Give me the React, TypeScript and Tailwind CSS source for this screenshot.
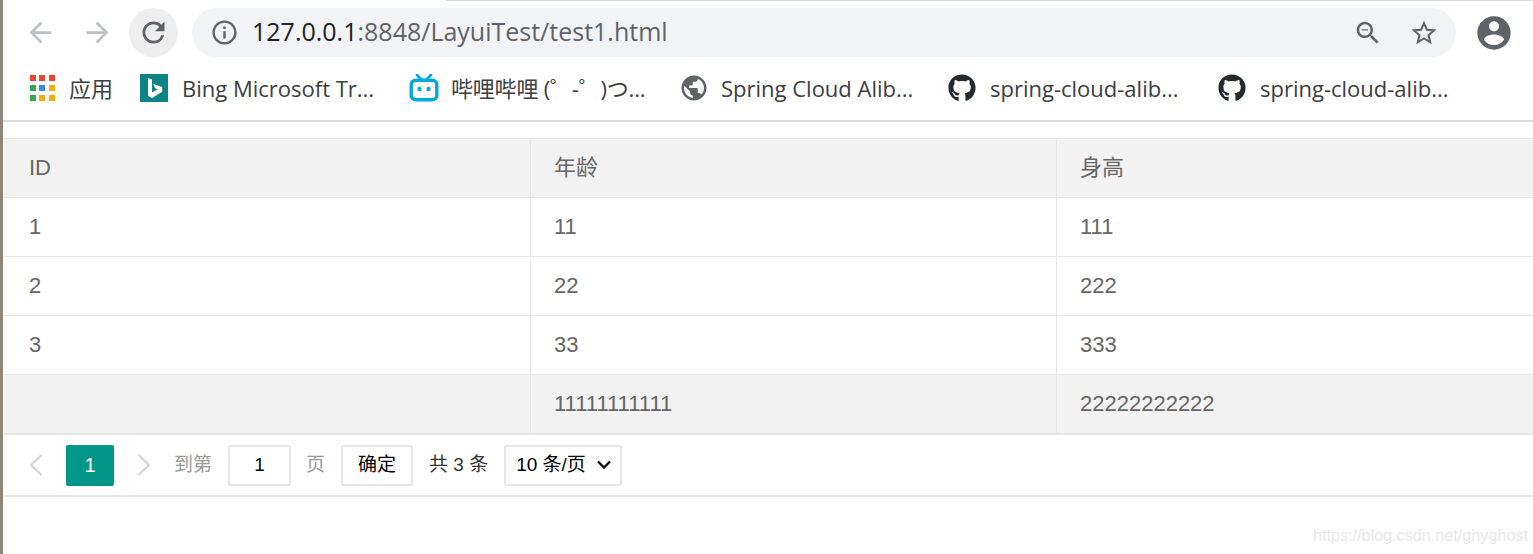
import { FaGithub } from 'react-icons/fa';

const uiFont = "font-['Open_Sans','Noto_Sans_CJK_SC',sans-serif]";
const tableFont = "font-['Liberation_Sans','Noto_Sans_CJK_SC',sans-serif]";

function MaterialIcon({ d, className }: { d: string; className: string }) {
  return (
    <svg viewBox="0 0 24 24" fill="currentColor" className={className}>
      <path d={d} />
    </svg>
  );
}

const icons = {
  back: 'M20 11H7.83l5.59-5.59L12 4l-8 8 8 8 1.41-1.41L7.83 13H20v-2z',
  forward: 'M12 4l-1.41 1.41L16.17 11H4v2h12.17l-5.58 5.59L12 20l8-8z',
  reload:
    'M17.65 6.35A7.958 7.958 0 0 0 12 4c-4.42 0-7.99 3.58-7.99 8s3.57 8 7.99 8c3.73 0 6.84-2.55 7.73-6h-2.08A5.99 5.99 0 0 1 12 18c-3.31 0-6-2.69-6-6s2.69-6 6-6c1.66 0 3.14.69 4.22 1.78L13 11h7V4l-2.35 2.35z',
  info: 'M11 7h2v2h-2zm0 4h2v6h-2zm1-9C6.48 2 2 6.48 2 12s4.48 10 10 10 10-4.48 10-10S17.52 2 12 2zm0 18c-4.41 0-8-3.59-8-8s3.59-8 8-8 8 3.59 8 8-3.59 8-8 8z',
  zoomOut:
    'M15.5 14h-.79l-.28-.27C15.41 12.59 16 11.11 16 9.5 16 5.91 13.09 3 9.5 3S3 5.91 3 9.5 5.91 16 9.5 16c1.61 0 3.09-.59 4.23-1.57l.27.28v.79l5 4.99L20.49 19l-4.99-5zm-6 0C7.01 14 5 11.99 5 9.5S7.01 5 9.5 5 14 7.01 14 9.5 11.99 14 9.5 14zM7 9h5v1H7z',
  star: 'M22 9.24l-7.19-.62L12 2 9.19 8.63 2 9.24l5.46 4.73L5.82 21 12 17.27 18.18 21l-1.63-7.03L22 9.24zM12 15.4l-3.76 2.27 1-4.28-3.32-2.88 4.38-.38L12 6.1l1.71 4.04 4.38.38-3.32 2.88 1 4.28L12 15.4z',
  account:
    'M12 2C6.48 2 2 6.48 2 12s4.48 10 10 10 10-4.48 10-10S17.52 2 12 2zm0 3c1.66 0 3 1.34 3 3s-1.34 3-3 3-3-1.34-3-3 1.34-3 3-3zm0 14.2c-2.5 0-4.71-1.28-6-3.22.03-1.99 4-3.08 6-3.08 1.99 0 5.97 1.09 6 3.08-1.29 1.94-3.5 3.22-6 3.22z',
  globe:
    'M12 2C6.48 2 2 6.48 2 12s4.48 10 10 10 10-4.48 10-10S17.52 2 12 2zm-1 17.93c-3.95-.49-7-3.85-7-7.93 0-.62.08-1.21.21-1.79L9 15v1c0 1.1.9 2 2 2v1.93zm6.9-2.54c-.26-.81-1-1.39-1.9-1.39h-1v-3c0-.55-.45-1-1-1H8v-2h2c.55 0 1-.45 1-1V7h2c1.1 0 2-.9 2-2v-.41c2.93 1.19 5 4.06 5 7.41 0 2.08-.8 3.97-2.1 5.39z',
};

function AppsIcon() {
  const colors = ['#ef4136', '#ef4136', '#ef4136', '#34a853', '#2f8cf3', '#fbab09', '#34a853', '#fbab09', '#fbab09'];
  return (
    <div className="grid grid-cols-3 gap-[4px] w-[24px]">
      {colors.map((c, i) => (
        <span key={i} className="w-[6px] h-[6px]" style={{ backgroundColor: c }} />
      ))}
    </div>
  );
}

function BingIcon() {
  return (
    <svg viewBox="0 0 28 28" className="w-[28px] h-[28px]">
      <rect width="28" height="28" fill="#0c8484" />
      <path d="M8 4l4 1.4v13.2l5.6-3.2-2.7-1.3-1.7-4.2 9 3.2v4.6L12 24l-4-2.2z" fill="#fff" />
    </svg>
  );
}

function BiliIcon() {
  return (
    <svg viewBox="0 0 30 28" className="w-[30px] h-[28px]">
      <path d="M8 1l5 5M22 1l-5 5" stroke="#00a9de" strokeWidth="2.6" strokeLinecap="round" />
      <rect x="2.2" y="6.2" width="25.6" height="19.6" rx="4.5" fill="none" stroke="#00a9de" strokeWidth="3.4" />
      <circle cx="10.5" cy="15" r="2.2" fill="#00a9de" />
      <circle cx="19.5" cy="15" r="2.2" fill="#00a9de" />
    </svg>
  );
}

function Bookmark({ icon, label, className }: { icon: React.ReactNode; label: string; className: string }) {
  return (
    <div className={`flex items-center ${className}`}>
      {icon}
      <span className="text-[22px] leading-none text-[#3c4043] whitespace-nowrap">{label}</span>
    </div>
  );
}

const rows = [
  { id: 'ID', age: '年龄', height: '身高', shaded: true },
  { id: '1', age: '11', height: '111' },
  { id: '2', age: '22', height: '222' },
  { id: '3', age: '33', height: '333' },
  { id: '', age: '11111111111', height: '22222222222', shaded: true },
];

export default function App() {
  return (
    <div className="w-[1533px] h-[554px] overflow-hidden bg-white border-l-[3px] border-[#8c8878]">
      {/* browser chrome */}
      <div className={`h-[122px] border-b-2 border-[#dadce0] ${uiFont}`}>
        <div className="flex h-px">
          <div className="w-[443px]" />
          <div className="flex-1 bg-[#dadce0]" />
        </div>
        <div className="flex items-center h-[64px] pb-[1px]">
          <MaterialIcon d={icons.back} className="ml-[21px] w-[33px] h-[33px] text-[#bdc1c6]" />
          <MaterialIcon d={icons.forward} className="ml-[24px] w-[33px] h-[33px] text-[#bdc1c6]" />
          <div className="ml-[15px] w-[49px] h-[49px] rounded-full bg-[#eeeeee] flex items-center justify-center">
            <MaterialIcon d={icons.reload} className="w-[33px] h-[33px] text-[#5f6368]" />
          </div>
          <div className="ml-[14px] w-[1264px] h-[49px] rounded-full bg-[#f1f3f4] flex items-center">
            <MaterialIcon d={icons.info} className="ml-[18px] w-[29px] h-[29px] text-[#5f6368]" />
            <span className="ml-[13px] pb-[2px] text-[25px] leading-none whitespace-nowrap">
              <span className="text-[#202124]">127.0.0.1</span>
              <span className="text-[#5f6368]">:8848/LayuiTest/test1.html</span>
            </span>
            <MaterialIcon d={icons.zoomOut} className="ml-auto w-[30px] h-[30px] text-[#5f6368]" />
            <MaterialIcon d={icons.star} className="ml-[26px] mr-[17px] w-[30px] h-[30px] text-[#5f6368]" />
          </div>
          <MaterialIcon d={icons.account} className="ml-[18px] w-[40px] h-[40px] text-[#5f6368]" />
        </div>
        <div className="flex items-center h-[52px] pb-[6px]">
          <Bookmark className="ml-[27px] w-[110px] gap-[15px]" icon={<AppsIcon />} label="应用" />
          <Bookmark className="w-[269px] gap-[14px]" icon={<BingIcon />} label="Bing Microsoft Tr..." />
          <Bookmark
            className="w-[270px] gap-[12px] tracking-[-0.2px]"
            icon={<BiliIcon />}
            label="哔哩哔哩 (゜-゜)つ..."
          />
          <Bookmark
            className="w-[269px] gap-[12px]"
            icon={<MaterialIcon d={icons.globe} className="w-[30px] h-[30px] text-[#5f6368]" />}
            label="Spring Cloud Alib..."
          />
          <Bookmark
            className="w-[270px] gap-[14px]"
            icon={<FaGithub className="w-[28px] h-[28px] text-[#24292e]" />}
            label="spring-cloud-alib..."
          />
          <Bookmark
            className="gap-[14px]"
            icon={<FaGithub className="w-[28px] h-[28px] text-[#24292e]" />}
            label="spring-cloud-alib..."
          />
        </div>
      </div>

      {/* table */}
      <div className={`mt-[16px] ml-px ${tableFont}`}>
        <div className="border-t border-[#e6e6e6]">
          {rows.map((row, i) => (
            <div
              key={i}
              className={`grid grid-cols-[527px_526px_1fr] h-[59px] border-b border-[#e6e6e6] text-[22px] text-[#666666] ${
                row.shaded ? 'bg-[#f2f2f2]' : 'bg-white'
              }`}
            >
              <div className="flex items-center pb-[2px] pl-[25px] border-r border-[#e6e6e6]">{row.id}</div>
              <div className="flex items-center pb-[2px] pl-[23px] border-r border-[#e6e6e6]">{row.age}</div>
              <div className="flex items-center pb-[2px] pl-[23px]">{row.height}</div>
            </div>
          ))}
        </div>

        {/* pagination */}
        <div className="flex items-center h-[63px] border-t border-b-2 border-[#e6e6e6] text-[19px]">
          <svg viewBox="0 0 14 22" className="ml-[25px] w-[14px] h-[22px]" fill="none" stroke="#d2d2d2" strokeWidth="2">
            <path d="M12.5 1L2 11l10.5 10" />
          </svg>
          <div className="ml-[23px] w-[48px] h-[41px] rounded-[2px] bg-[#009688] text-white flex items-center justify-center text-[20px]">
            1
          </div>
          <svg viewBox="0 0 14 22" className="ml-[23px] w-[14px] h-[22px]" fill="none" stroke="#d2d2d2" strokeWidth="2">
            <path d="M1.5 1L12 11 1.5 21" />
          </svg>
          <span className="ml-[23px] text-[#999999]">到第</span>
          <div className="ml-[16px] w-[63px] h-[41px] border-2 border-[#e6e6e6] rounded-[2px] flex items-center justify-center text-black">
            1
          </div>
          <span className="ml-[15px] text-[#999999]">页</span>
          <div className="ml-[16px] w-[72px] h-[41px] border-2 border-[#e6e6e6] rounded-[2px] flex items-center justify-center text-black">
            确定
          </div>
          <span className="ml-[16px] text-[#333333]">共 3 条</span>
          <div className="ml-[16px] w-[118px] h-[41px] border-2 border-[#e6e6e6] rounded-[2px] flex items-center pl-[10px] text-black">
            10 条/页
            <svg viewBox="0 0 14 10" className="ml-auto mr-[9px] w-[14px] h-[10px]" fill="none" stroke="#111" strokeWidth="2.4">
              <path d="M1 1.5l6 6 6-6" />
            </svg>
          </div>
        </div>
      </div>

      {/* watermark */}
      <div className={`mt-[29px] pr-[5px] text-right text-[16.2px] leading-[18px] text-[#e8e8e8] ${tableFont}`}>
        https://blog.csdn.net/ghyghost
      </div>
    </div>
  );
}
